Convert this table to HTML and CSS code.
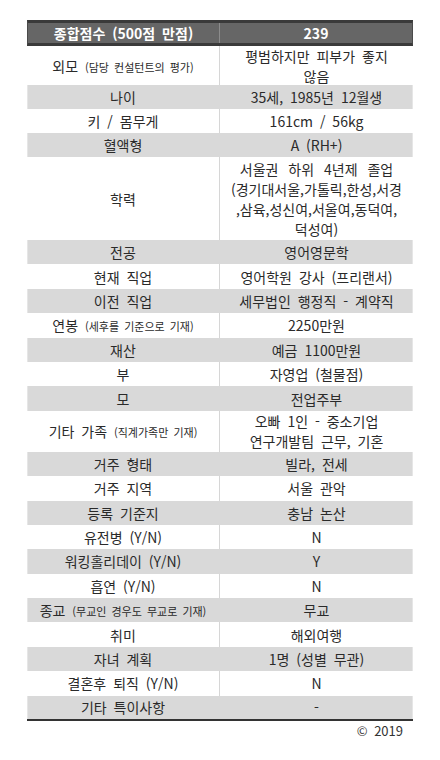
FILE: index.html
```html
<!DOCTYPE html>
<html lang="ko">
<head>
<meta charset="utf-8">
<title>프로필</title>
<link rel="stylesheet" href="styles.css">
</head>
<body>
<div class="sheet">
  <div class="table">
    <div class="row head"><div class="cell k"><span>종합점수 (500점 만점)</span></div><div class="cell v"><span>239</span></div></div>
    <div class="row r2a"><div class="cell k"><span>외모 <small>(담당 컨설턴트의 평가)</small></span></div><div class="cell v"><span>평범하지만 피부가 좋지<br>않음</span></div></div>
    <div class="row g s24"><div class="cell k"><span>나이</span></div><div class="cell v"><span>35세, 1985년 12월생</span></div></div>
    <div class="row s24"><div class="cell k"><span>키 / 몸무게</span></div><div class="cell v"><span>161cm / 56kg</span></div></div>
    <div class="row g s24"><div class="cell k"><span>혈액형</span></div><div class="cell v"><span>A (RH+)</span></div></div>
    <div class="row r4"><div class="cell k"><span>학력</span></div><div class="cell v"><span><span class="wide">서울권 하위 4년제 졸업</span><br>(경기대서울,가톨릭,한성,서경<br>,삼육,성신여,서울여,동덕여,<br>덕성여)</span></div></div>
    <div class="row g"><div class="cell k"><span>전공</span></div><div class="cell v"><span>영어영문학</span></div></div>
    <div class="row"><div class="cell k"><span>현재 직업</span></div><div class="cell v"><span>영어학원 강사 (프리랜서)</span></div></div>
    <div class="row g"><div class="cell k"><span>이전 직업</span></div><div class="cell v"><span>세무법인 행정직 - 계약직</span></div></div>
    <div class="row"><div class="cell k"><span>연봉 <small>(세후를 기준으로 기재)</small></span></div><div class="cell v"><span>2250만원</span></div></div>
    <div class="row g"><div class="cell k"><span>재산</span></div><div class="cell v"><span>예금 1100만원</span></div></div>
    <div class="row"><div class="cell k"><span>부</span></div><div class="cell v"><span>자영업 (철물점)</span></div></div>
    <div class="row g"><div class="cell k"><span>모</span></div><div class="cell v"><span>전업주부</span></div></div>
    <div class="row r2b"><div class="cell k"><span>기타 가족 <small>(직계가족만 기재)</small></span></div><div class="cell v"><span>오빠 1인 - 중소기업<br>연구개발팀 근무, 기혼</span></div></div>
    <div class="row g"><div class="cell k"><span>거주 형태</span></div><div class="cell v"><span>빌라, 전세</span></div></div>
    <div class="row"><div class="cell k"><span>거주 지역</span></div><div class="cell v"><span>서울 관악</span></div></div>
    <div class="row g"><div class="cell k"><span>등록 기준지</span></div><div class="cell v"><span>충남 논산</span></div></div>
    <div class="row"><div class="cell k"><span>유전병 (Y/N)</span></div><div class="cell v"><span>N</span></div></div>
    <div class="row g"><div class="cell k"><span>워킹홀리데이 (Y/N)</span></div><div class="cell v"><span>Y</span></div></div>
    <div class="row"><div class="cell k"><span>흡연 (Y/N)</span></div><div class="cell v"><span>N</span></div></div>
    <div class="row g"><div class="cell k"><span>종교 <small>(무교인 경우도 무교로 기재)</small></span></div><div class="cell v"><span>무교</span></div></div>
    <div class="row"><div class="cell k"><span>취미</span></div><div class="cell v"><span>해외여행</span></div></div>
    <div class="row g"><div class="cell k"><span>자녀 계획</span></div><div class="cell v"><span>1명 (성별 무관)</span></div></div>
    <div class="row"><div class="cell k"><span>결혼후 퇴직 (Y/N)</span></div><div class="cell v"><span>N</span></div></div>
    <div class="row g last"><div class="cell k"><span>기타 특이사항</span></div><div class="cell v"><span>-</span></div></div>
  </div>
  <div class="copy">© 2019</div>
</div>
</body>
</html>
```
FILE: styles.css
```css
html, body {
  margin: 0;
  padding: 0;
  background: #ffffff;
}
body {
  font-family: "Noto Sans CJK KR", "Noto Sans", sans-serif;
  color: #2a2a2a;
  font-size: 14px;
  line-height: 20px;
}
.sheet {
  width: 386px;
  margin-left: 27px;
  padding-top: 20px;
}
.table {
  display: flex;
  flex-direction: column;
  border-bottom: 2px solid #333333;
}
.row {
  display: grid;
  grid-template-columns: 193px 1fr;
  height: 24.4px;
}
.cell {
  display: flex;
  align-items: center;
  justify-content: center;
  text-align: center;
  word-spacing: 3px;
  white-space: nowrap;
}
.cell > span {
  display: block;
}
.cell.k {
  border-right: 1px solid #d6d6d6;
}
.row.g {
  background: #d9d9d9;
  box-shadow: inset 1px 0 0 #e6e6e6, inset -1px 0 0 #e6e6e6;
}
.row.g .cell.k {
  border-right-color: #d9d9d9;
}
.row.head {
  height: 26px;
  box-sizing: border-box;
  background: #666666;
  border-top: 3px solid #3a3a3a;
  border-bottom: 3px solid #3a3a3a;
  border-left: 1px solid #4a4a4a;
  border-right: 1px solid #4a4a4a;
  color: #ffffff;
  font-weight: bold;
  grid-template-columns: 192px 1fr;
}
.row.head .cell.k {
  border-right: 1px solid #8c8c8c;
}
.row.s24 {
  height: 24px;
}
.row.r2a {
  height: 39px;
}
.row.r2b {
  height: 41px;
}
.row.r4 {
  height: 83px;
}
.row.last {
  height: 23px;
}
small {
  font-size: 11px;
  word-spacing: 2px;
}
.wide {
  word-spacing: 6px;
}
.copy {
  text-align: right;
  padding-right: 10px;
  margin-top: 2px;
  font-size: 13px;
  line-height: 16px;
  word-spacing: 3px;
  color: #333333;
}
```
